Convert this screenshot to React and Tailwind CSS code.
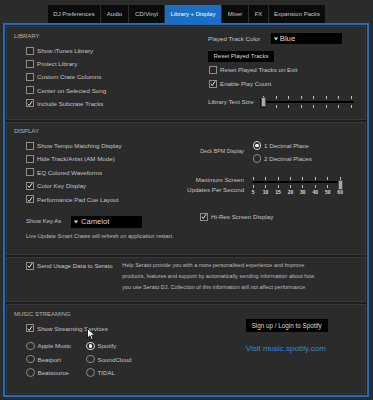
import React from 'react';

const tabs = [
  { name: 'DJ Preferences', w: 'w-[53px]' },
  { name: 'Audio', w: 'w-[28px]' },
  { name: 'CD/Vinyl', w: 'w-[36px]' },
  { name: 'Library + Display', w: 'w-[57px]', active: true },
  { name: 'Mixer', w: 'w-[27px]' },
  { name: 'FX', w: 'w-[20px]' },
  { name: 'Expansion Packs', w: 'w-[57px]' },
];

const Checkbox = ({ checked }) => (
  <span className="w-[8px] h-[8px] border border-[#8e8e8e] bg-[#262626] flex items-center justify-center shrink-0">
    {checked && (
      <svg width="7" height="7" viewBox="0 0 7 7">
        <path d="M1 3.8 L2.6 5.8 L6 0.8" fill="none" stroke="#f2f2f2" strokeWidth="1.1" />
      </svg>
    )}
  </span>
);

const CheckRow = ({ label, checked, className = '' }) => (
  <div className={`flex items-center gap-[3px] ${className}`}>
    <Checkbox checked={checked} />
    <span className="text-[6.2px] text-[#c4c4c4] whitespace-nowrap">{label}</span>
  </div>
);

const Radio = ({ label, selected, className = '' }) => (
  <div className={`flex items-center gap-[3px] ${className}`}>
    <span
      className={`w-[8.5px] h-[8.5px] rounded-full border flex items-center justify-center shrink-0 ${
        selected ? 'border-[#cfcfcf]' : 'border-[#8a8a8a]'
      }`}
    >
      {selected && <span className="w-[3.5px] h-[3.5px] rounded-full bg-white" />}
    </span>
    <span className="text-[6.2px] text-[#c4c4c4] whitespace-nowrap">{label}</span>
  </div>
);

const Caret = () => (
  <svg width="4" height="4" viewBox="0 0 4 4" className="shrink-0">
    <path d="M0 0.5 L4 0.5 L2 3.5 Z" fill="#e0e0e0" />
  </svg>
);

const Ticks = ({ count, pad }) => (
  <div className={`flex justify-between h-[3px] ${pad}`}>
    {Array.from({ length: count }).map((_, i) => (
      <span key={i} className="w-[1px] h-full bg-[#bdbdbd]" />
    ))}
  </div>
);

const Header = ({ children }) => (
  <div className="text-[6px] leading-[8px] h-[8px] text-[#b4b4b4] whitespace-nowrap">{children}</div>
);

const App = () => {
  return (
    <div className="w-[373px] h-[400px] bg-[#2b2b2b] overflow-hidden relative font-['Liberation_Sans',Arial,sans-serif]">
      {/* tabs */}
      <div className="flex pl-[48px] pt-[5px]">
        {tabs.map((t) => (
          <div
            key={t.name}
            className={`${t.w} h-[18px] flex items-center justify-center border-r border-[#2e2e2e] text-[6px] whitespace-nowrap ${
              t.active ? 'bg-[#1b6ec2] text-white' : 'bg-[#0b0b0b] text-[#c8c8c8]'
            }`}
          >
            {t.name}
          </div>
        ))}
      </div>

      {/* frame */}
      <div className="ml-[3px] w-[366px] h-[374px] border-2 border-[#1b6ec2] bg-[#1e1e1e] p-[1px] flex flex-col gap-[2px]">
        {/* LIBRARY */}
        <div className="h-[94px] flex border border-[#3a3a3a] bg-[#2b2b2b] shrink-0">
          <div className="w-[201px] pt-[5px] pl-[7px]">
            <Header>LIBRARY</Header>
            <div className="mt-[4px] pl-[12px]">
              <CheckRow label="Show iTunes Library" className="h-[13.2px]" />
              <CheckRow label="Protect Library" className="h-[13.2px]" />
              <CheckRow label="Custom Crate Columns" className="h-[13.2px]" />
              <CheckRow label="Center on Selected Song" className="h-[13.2px]" />
              <CheckRow label="Include Subcrate Tracks" checked className="h-[13.2px]" />
            </div>
          </div>
          <div className="flex flex-col pt-[6.3px]">
            <div className="flex items-center h-[11px]">
              <span className="w-[62.7px] text-[6.2px] text-[#c4c4c4] whitespace-nowrap">Played Track Color</span>
              <div className="w-[71px] h-[11px] bg-black flex items-center pl-[3px] gap-[2px]">
                <Caret />
                <span className="text-[7.8px] text-[#dcdcdc] leading-none">Blue</span>
              </div>
            </div>
            <div className="mt-[6.7px] w-[66px] h-[10.7px] bg-black flex items-center justify-center text-[6px] text-[#dcdcdc] whitespace-nowrap">
              Reset Played Tracks
            </div>
            <div className="mt-[1.3px] ml-[1px]">
              <CheckRow label="Reset Played Tracks on Exit" className="h-[14px]" />
              <CheckRow label="Enable Play Count" checked className="h-[14px]" />
            </div>
            <div className="mt-[4.7px] h-[12px] flex items-center">
              <span className="w-[53px] text-[6.2px] text-[#c4c4c4] whitespace-nowrap">Library Text Size</span>
              <div className="relative w-[93px] flex flex-col">
                <Ticks count={8} pad="px-[2px]" />
                <div className="h-[2px] mt-[2px] bg-black" />
                <div className="mt-[2px]">
                  <Ticks count={8} pad="px-[2px]" />
                </div>
                <span className="absolute left-[0px] top-[1.5px] w-[5px] h-[10px] bg-[#a9a9a9] border border-[#4a4a4a] rounded-[1px] shadow-[-1px_1px_0_#111]" />
              </div>
            </div>
          </div>
        </div>

        {/* DISPLAY */}
        <div className="h-[133px] flex border border-[#3a3a3a] bg-[#2b2b2b] shrink-0">
          <div className="w-[180px] pt-[4px] pl-[7px]">
            <Header>DISPLAY</Header>
            <div className="mt-[4px] pl-[12px]">
              <CheckRow label="Show Tempo Matching Display" className="h-[13.4px]" />
              <CheckRow label="Hide Track/Artist (AM Mode)" className="h-[13.4px]" />
              <CheckRow label="EQ Colored Waveforms" className="h-[13.4px]" />
              <CheckRow label="Color Key Display" checked className="h-[13.4px]" />
              <CheckRow label="Performance Pad Cue Layout" checked className="h-[13.4px]" />
              <div className="mt-[9.5px] flex items-center h-[12.5px]">
                <span className="w-[45px] text-[6px] text-[#c4c4c4] whitespace-nowrap">Show Key As</span>
                <div className="w-[71px] h-[12.3px] bg-black flex items-center pl-[3px] gap-[3px]">
                  <Caret />
                  <span className="text-[7.6px] text-[#dcdcdc] leading-none">Camelot</span>
                </div>
              </div>
              <div className="mt-[4.2px] h-[8px] flex items-center text-[5.6px] text-[#bcbcbc] whitespace-nowrap">
                Live Update Smart Crates will refresh on application restart.
              </div>
            </div>
          </div>
          <div className="flex flex-col pt-[15.6px]">
            <div className="flex">
              <div className="w-[57px] flex items-center justify-end text-[5.3px] text-[#c4c4c4] whitespace-nowrap">
                Deck BPM Display
              </div>
              <div className="ml-[8.5px]">
                <Radio label="1 Decimal Place" selected className="h-[13.4px]" />
                <Radio label="2 Decimal Places" className="h-[13.4px]" />
              </div>
            </div>
            <div className="flex mt-[9.2px]">
              <div className="w-[57px] text-right text-[6.2px] leading-[10.7px] text-[#c4c4c4] whitespace-nowrap">
                Maximum Screen
                <br />
                Updates Per Second
              </div>
              <div className="ml-[7.7px] mt-[2.4px] relative w-[90px] flex flex-col">
                <Ticks count={8} pad="px-[1px]" />
                <div className="h-[2px] mt-[1.5px] bg-black" />
                <div className="mt-[1.5px]">
                  <Ticks count={8} pad="px-[1px]" />
                </div>
                <div className="flex justify-between px-[1px] mt-[2px] h-[5px]">
                  {['5', '10', '15', '20', '30', '40', '50', '60'].map((n) => (
                    <span key={n} className="w-[1px] flex justify-center">
                      <span className="text-[5px] leading-[5px] font-bold text-[#dedede] whitespace-nowrap">{n}</span>
                    </span>
                  ))}
                </div>
                <span className="absolute right-[-1px] top-[3px] w-[5px] h-[10px] bg-[#a9a9a9] border border-[#4a4a4a] rounded-[1px]" />
              </div>
            </div>
            <div className="mt-[15.7px] ml-[13px]">
              <CheckRow label="Hi-Res Screen Display" checked className="h-[10px]" />
            </div>
          </div>
        </div>

        {/* usage data */}
        <div className="h-[45px] flex border border-[#3a3a3a] bg-[#2b2b2b] shrink-0 pt-[2.3px]">
          <div className="w-[115.3px] pl-[19px]">
            <CheckRow label="Send Usage Data to Serato" checked className="h-[10.8px]" />
          </div>
          <p className="text-[5.5px] leading-[10.8px] text-[#bcbcbc] whitespace-nowrap">
            Help Serato provide you with a more personalised experience and improve
            <br />
            products, features and support by automatically sending information about how
            <br />
            you use Serato DJ. Collection of this information will not affect performance
          </p>
        </div>

        {/* MUSIC STREAMING */}
        <div className="flex-1 flex border border-[#3a3a3a] bg-[#2b2b2b]">
          <div className="w-[238.7px] pt-[5px] pl-[7px]">
            <Header>MUSIC STREAMING</Header>
            <div className="mt-[5.3px] pl-[12px]">
              <CheckRow label="Show Streaming Services" checked className="h-[10px]" />
              <div className="mt-[6.1px] flex">
                <div className="w-[60px]">
                  <Radio label="Apple Music" className="h-[13.2px]" />
                  <Radio label="Beatport" className="h-[13.2px]" />
                  <Radio label="Beatsource" className="h-[13.2px]" />
                </div>
                <div>
                  <Radio label="Spotify" selected className="h-[13.2px]" />
                  <Radio label="SoundCloud" className="h-[13.2px]" />
                  <Radio label="TIDAL" className="h-[13.2px]" />
                </div>
              </div>
            </div>
          </div>
          <div className="flex flex-col pt-[14.3px]">
            <div className="w-[82px] h-[12.4px] bg-black flex items-center justify-center text-[6.3px] text-[#dcdcdc] whitespace-nowrap">
              Sign up / Login to Spotify
            </div>
            <div className="mt-[12.3px] h-[10px] flex items-center text-[8px] text-[#2f8ad6] whitespace-nowrap">
              Visit music.spotify.com
            </div>
          </div>
        </div>
      </div>

      {/* mouse cursor */}
      <svg className="absolute left-[87px] top-[328px]" width="9" height="13" viewBox="0 0 9 13">
        <path
          d="M0.5 0.5 L0.5 10 L2.9 7.8 L4.6 11.8 L6.2 11.1 L4.5 7.2 L7.8 7.2 Z"
          fill="#ffffff"
          stroke="#000000"
          strokeWidth="0.8"
        />
      </svg>
    </div>
  );
};

export default App;
